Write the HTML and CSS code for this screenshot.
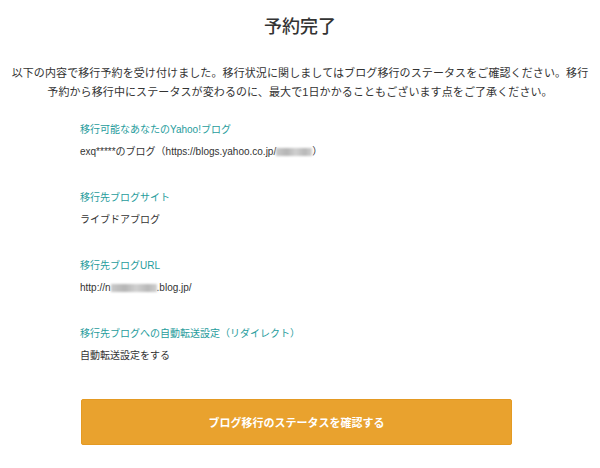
FILE: index.html
```html
<!DOCTYPE html>
<html lang="ja">
<head>
<meta charset="utf-8">
<title>予約完了</title>
<link rel="stylesheet" href="styles.css">
</head>
<body>
<main class="page">
  <h1 class="title">予約完了</h1>
  <p class="lead">以下の内容で移行予約を受け付けました。移行状況に関しましてはブログ移行のステータスをご確認ください。移行予約から移行中にステータスが変わるのに、最大で1日かかることもございます点をご了承ください。</p>
  <dl class="details">
    <div class="item">
      <dt class="label">移行可能なあなたのYahoo!ブログ</dt>
      <dd class="value">exq*****のブログ（https://blogs.yahoo.co.jp/<span class="blur blur-a"></span>）</dd>
    </div>
    <div class="item">
      <dt class="label">移行先ブログサイト</dt>
      <dd class="value">ライブドアブログ</dd>
    </div>
    <div class="item">
      <dt class="label">移行先ブログURL</dt>
      <dd class="value">http://n<span class="blur blur-b"></span>.blog.jp/</dd>
    </div>
    <div class="item">
      <dt class="label">移行先ブログへの自動転送設定（リダイレクト）</dt>
      <dd class="value">自動転送設定をする</dd>
    </div>
  </dl>
  <div class="actions">
    <a class="btn" href="#">ブログ移行のステータスを確認する</a>
  </div>
</main>
</body>
</html>
```

FILE: styles.css
```css
html, body {
  background: #ffffff;
}
body {
  margin: 8px;
  font-family: "Liberation Sans", "Noto Sans CJK JP", sans-serif;
  color: #333333;
}
.page {
  display: flex;
  flex-direction: column;
}
.title {
  margin: 6px 0 0;
  font-size: 18px;
  line-height: 26px;
  font-weight: 500;
  text-align: center;
  color: #333333;
}
.lead {
  margin: 24px 0 0;
  font-size: 11px;
  letter-spacing: 0.1px;
  line-height: 19px;
  text-align: center;
  color: #333333;
}
.details {
  margin: 20px 0 0 72px;
  width: 432px;
  display: flex;
  flex-direction: column;
  gap: 30px;
}
.item {
  display: flex;
  flex-direction: column;
  gap: 6px;
}
.label {
  font-size: 10px;
  line-height: 16px;
  color: #1f9c9c;
}
.value {
  margin: 0;
  font-size: 10px;
  line-height: 16px;
  color: #333333;
}
.blur {
  display: inline-block;
  height: 8px;
  vertical-align: -1px;
  background: linear-gradient(90deg, #c9c9c9, #b5b5b5 30%, #d0d0d0 55%, #b8b8b8 80%, #cfcfcf);
  filter: blur(1.2px);
}
.blur-a {
  width: 36px;
}
.blur-b {
  width: 46px;
}
.actions {
  margin: 35px 0 0 73px;
  width: 431px;
}
.btn {
  display: flex;
  align-items: center;
  justify-content: center;
  height: 44px;
  background: #e9a22e;
  border: 1px solid #e49a23;
  border-radius: 2px;
  color: #ffffff;
  font-size: 11px;
  font-weight: bold;
  text-decoration: none;
}
```
